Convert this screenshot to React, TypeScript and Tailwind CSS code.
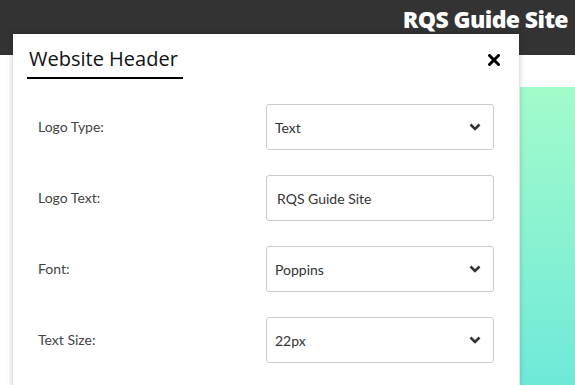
const Chevron = () => (
  <svg width="12" height="8" viewBox="0 0 12 8" className="shrink-0">
    <polyline points="1.5,1.5 6,6 10.5,1.5" fill="none" stroke="#333" strokeWidth="2.6" />
  </svg>
);

const CloseIcon = () => (
  <svg width="12" height="12" viewBox="0 0 12 12">
    <path d="M1.5 1.5 L10.5 10.5 M10.5 1.5 L1.5 10.5" stroke="#000" strokeWidth="3" strokeLinecap="round" />
  </svg>
);

const SelectBox = ({ value }: { value: string }) => (
  <div className="flex h-[46px] w-[228px] items-center justify-between rounded-[3px] border border-[#cccccc] bg-white pl-[8px] pr-[12px] text-[14px] text-[#333]">
    <span>{value}</span>
    <Chevron />
  </div>
);

const TextBox = ({ value }: { value: string }) => (
  <div className="flex h-[46px] w-[228px] items-center rounded-[3px] border border-[#cccccc] bg-white px-[10px] text-[14px] text-[#333]">
    {value}
  </div>
);

const rows = [
  { label: "Logo Type:", field: <SelectBox value="Text" /> },
  { label: "Logo Text:", field: <TextBox value="RQS Guide Site" /> },
  { label: "Font:", field: <SelectBox value="Poppins" /> },
  { label: "Text Size:", field: <SelectBox value="22px" /> },
];

export default function App() {
  return (
    <div className="relative h-[385px] w-[575px] overflow-hidden bg-white" style={{ fontFamily: "Lato, 'Open Sans', sans-serif" }}>
      <div className="flex h-[55px] justify-end bg-[#333333] pr-[7px] pt-[2px]">
        <span className="text-[23px] font-extrabold tracking-[-0.6px] text-white" style={{ fontFamily: "'Open Sans', sans-serif" }}>
          RQS Guide Site
        </span>
      </div>

      <div className="flex justify-end pt-[32px]">
        <div className="h-[300px] w-[55px] bg-gradient-to-b from-[#a2fbca] to-[#6de9d9]" />
      </div>

      <div className="absolute left-[13px] top-[34px] h-[360px] w-[506px] bg-white shadow-[0_0_6px_rgba(0,0,0,0.25)]">
        <div className="flex items-start justify-between pl-[14px] pr-[19px] pt-[13px]">
          <div
            className="border-b-2 border-black pb-[6px] pl-[2px] pr-[5px] text-[20px] leading-[24px] text-[#111]"
            style={{ fontFamily: "'Open Sans', sans-serif" }}
          >
            Website Header
          </div>
          <div className="pt-[7px]">
            <CloseIcon />
          </div>
        </div>

        <div className="flex flex-col gap-[25px] px-[25px] pt-[25px]">
          {rows.map((r) => (
            <div key={r.label} className="flex items-center">
              <div className="w-[228px] pb-[2px] text-[14px] text-[#444]">{r.label}</div>
              {r.field}
            </div>
          ))}
        </div>
      </div>
    </div>
  );
}
